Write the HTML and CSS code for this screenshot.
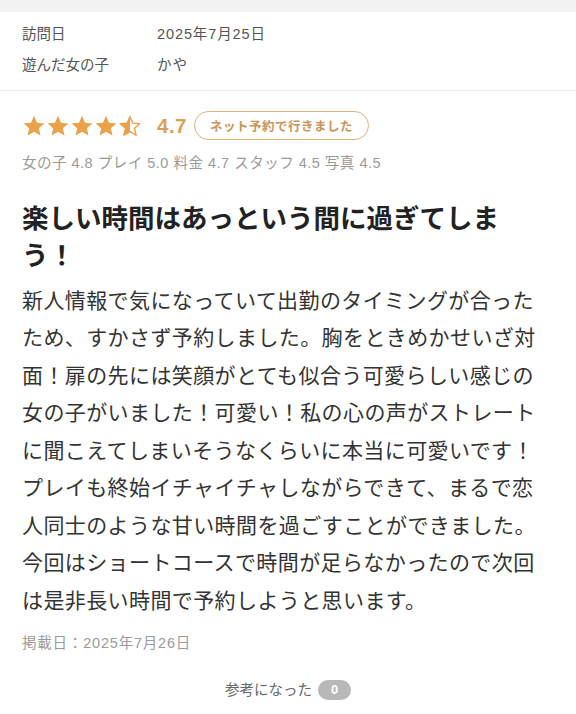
FILE: index.html
```html
<!DOCTYPE html>
<html lang="ja">
<head>
<meta charset="utf-8">
<link rel="stylesheet" href="styles.css">
</head>
<body>
<div class="topbar"></div>
<section class="info">
  <div class="row"><span class="label">訪問日</span><span class="value">2025年7月25日</span></div>
  <div class="row"><span class="label">遊んだ女の子</span><span class="value">かや</span></div>
</section>
<section class="review">
  <div class="rating">
    <div class="stars">
      <svg class="star" viewBox="0 0 24 24"><path d="M12 1.8l3 6.9 7.4.7-5.6 4.9 1.7 7.3L12 17.8l-6.5 3.8 1.7-7.3-5.6-4.9 7.4-.7z"/></svg>
      <svg class="star" viewBox="0 0 24 24"><path d="M12 1.8l3 6.9 7.4.7-5.6 4.9 1.7 7.3L12 17.8l-6.5 3.8 1.7-7.3-5.6-4.9 7.4-.7z"/></svg>
      <svg class="star" viewBox="0 0 24 24"><path d="M12 1.8l3 6.9 7.4.7-5.6 4.9 1.7 7.3L12 17.8l-6.5 3.8 1.7-7.3-5.6-4.9 7.4-.7z"/></svg>
      <svg class="star" viewBox="0 0 24 24"><path d="M12 1.8l3 6.9 7.4.7-5.6 4.9 1.7 7.3L12 17.8l-6.5 3.8 1.7-7.3-5.6-4.9 7.4-.7z"/></svg>
      <svg class="star half" viewBox="0 0 24 24">
        <defs><clipPath id="lh"><rect x="0" y="0" width="12" height="24"/></clipPath></defs>
        <path class="outline" d="M12 2.6l2.8 6.5 7 .6-5.3 4.6 1.6 6.9L12 17.6l-6.1 3.6 1.6-6.9-5.3-4.6 7-.6z"/>
        <path class="fill" clip-path="url(#lh)" d="M12 1.8l3 6.9 7.4.7-5.6 4.9 1.7 7.3L12 17.8l-6.5 3.8 1.7-7.3-5.6-4.9 7.4-.7z"/>
      </svg>
    </div>
    <span class="score">4.7</span>
    <span class="badge">ネット予約で行きました</span>
  </div>
  <p class="subscores">女の子 4.8 プレイ 5.0 料金 4.7 スタッフ 4.5 写真 4.5</p>
  <h1 class="title">楽しい時間はあっという間に過ぎてしまう！</h1>
  <p class="body">新人情報で気になっていて出勤のタイミングが合ったため、すかさず予約しました。胸をときめかせいざ対面！扉の先には笑顔がとても似合う可愛らしい感じの女の子がいました！可愛い！私の心の声がストレートに聞こえてしまいそうなくらいに本当に可愛いです！プレイも終始イチャイチャしながらできて、まるで恋人同士のような甘い時間を過ごすことができました。今回はショートコースで時間が足らなかったので次回は是非長い時間で予約しようと思います。</p>
  <p class="posted">掲載日：2025年7月26日</p>
  <div class="helpful"><span>参考になった</span><span class="count">0</span></div>
</section>
</body>
</html>
```

FILE: styles.css
```css
html, body {
  margin: 0;
  padding: 0;
  background: #fff;
}
body {
  font-family: "Liberation Sans", "Noto Sans CJK JP", sans-serif;
  color: #333;
  width: 576px;
}
.topbar {
  height: 12px;
  background: #f2f2f2;
}
.info {
  padding: 6.5px 22px 9px;
  border-bottom: 1px solid #ececec;
}
.row {
  display: grid;
  grid-template-columns: 135px 1fr;
  font-size: 14.5px;
  line-height: 31px;
  color: #555;
}
.value {
  letter-spacing: 0.9px;
}
.review {
  padding: 20px 22px 0 22px;
}
.rating {
  display: flex;
  align-items: center;
  height: 30px;
}
.stars {
  display: flex;
  width: 135px;
}
.star {
  width: 24px;
  height: 24px;
  fill: #eba04a;
}
.star.half .outline {
  fill: none;
  stroke: #eba04a;
  stroke-width: 1.4;
  stroke-linejoin: round;
}
.score {
  font-size: 20.5px;
  font-weight: 600;
  color: #d9a055;
  margin-right: 7px;
  letter-spacing: 0.5px;
}
.badge {
  display: inline-flex;
  align-items: center;
  height: 27px;
  padding: 0 15px;
  border: 1.5px solid #dcb07c;
  border-radius: 16px;
  font-size: 12.5px;
  font-weight: 700;
  color: #c9955c;
  letter-spacing: 0.5px;
}
.subscores {
  margin: 11px 0 0;
  font-size: 14.5px;
  line-height: 22px;
  letter-spacing: 0.5px;
  color: #9a9a9a;
}
.title {
  margin: 27px 0 0 0;
  width: 520px;
  font-size: 26.5px;
  line-height: 37px;
  font-weight: 700;
  color: #222;
}
.body {
  margin: 7px 0 0 0;
  width: 522px;
  font-size: 21px;
  letter-spacing: 0.4px;
  line-height: 37.5px;
  color: #333;
}
.posted {
  margin: 13px 0 0;
  font-size: 14.5px;
  line-height: 22px;
  letter-spacing: 0.8px;
  color: #9a9a9a;
}
.helpful {
  margin-top: 25px;
  display: flex;
  justify-content: center;
  align-items: center;
  gap: 6px;
  font-size: 14.5px;
  line-height: 22px;
  color: #666;
}
.count {
  display: inline-flex;
  justify-content: center;
  align-items: center;
  width: 33px;
  height: 20px;
  border-radius: 10px;
  background: #b8b8b8;
  color: #fff;
  font-weight: 700;
  font-size: 13px;
}
```
